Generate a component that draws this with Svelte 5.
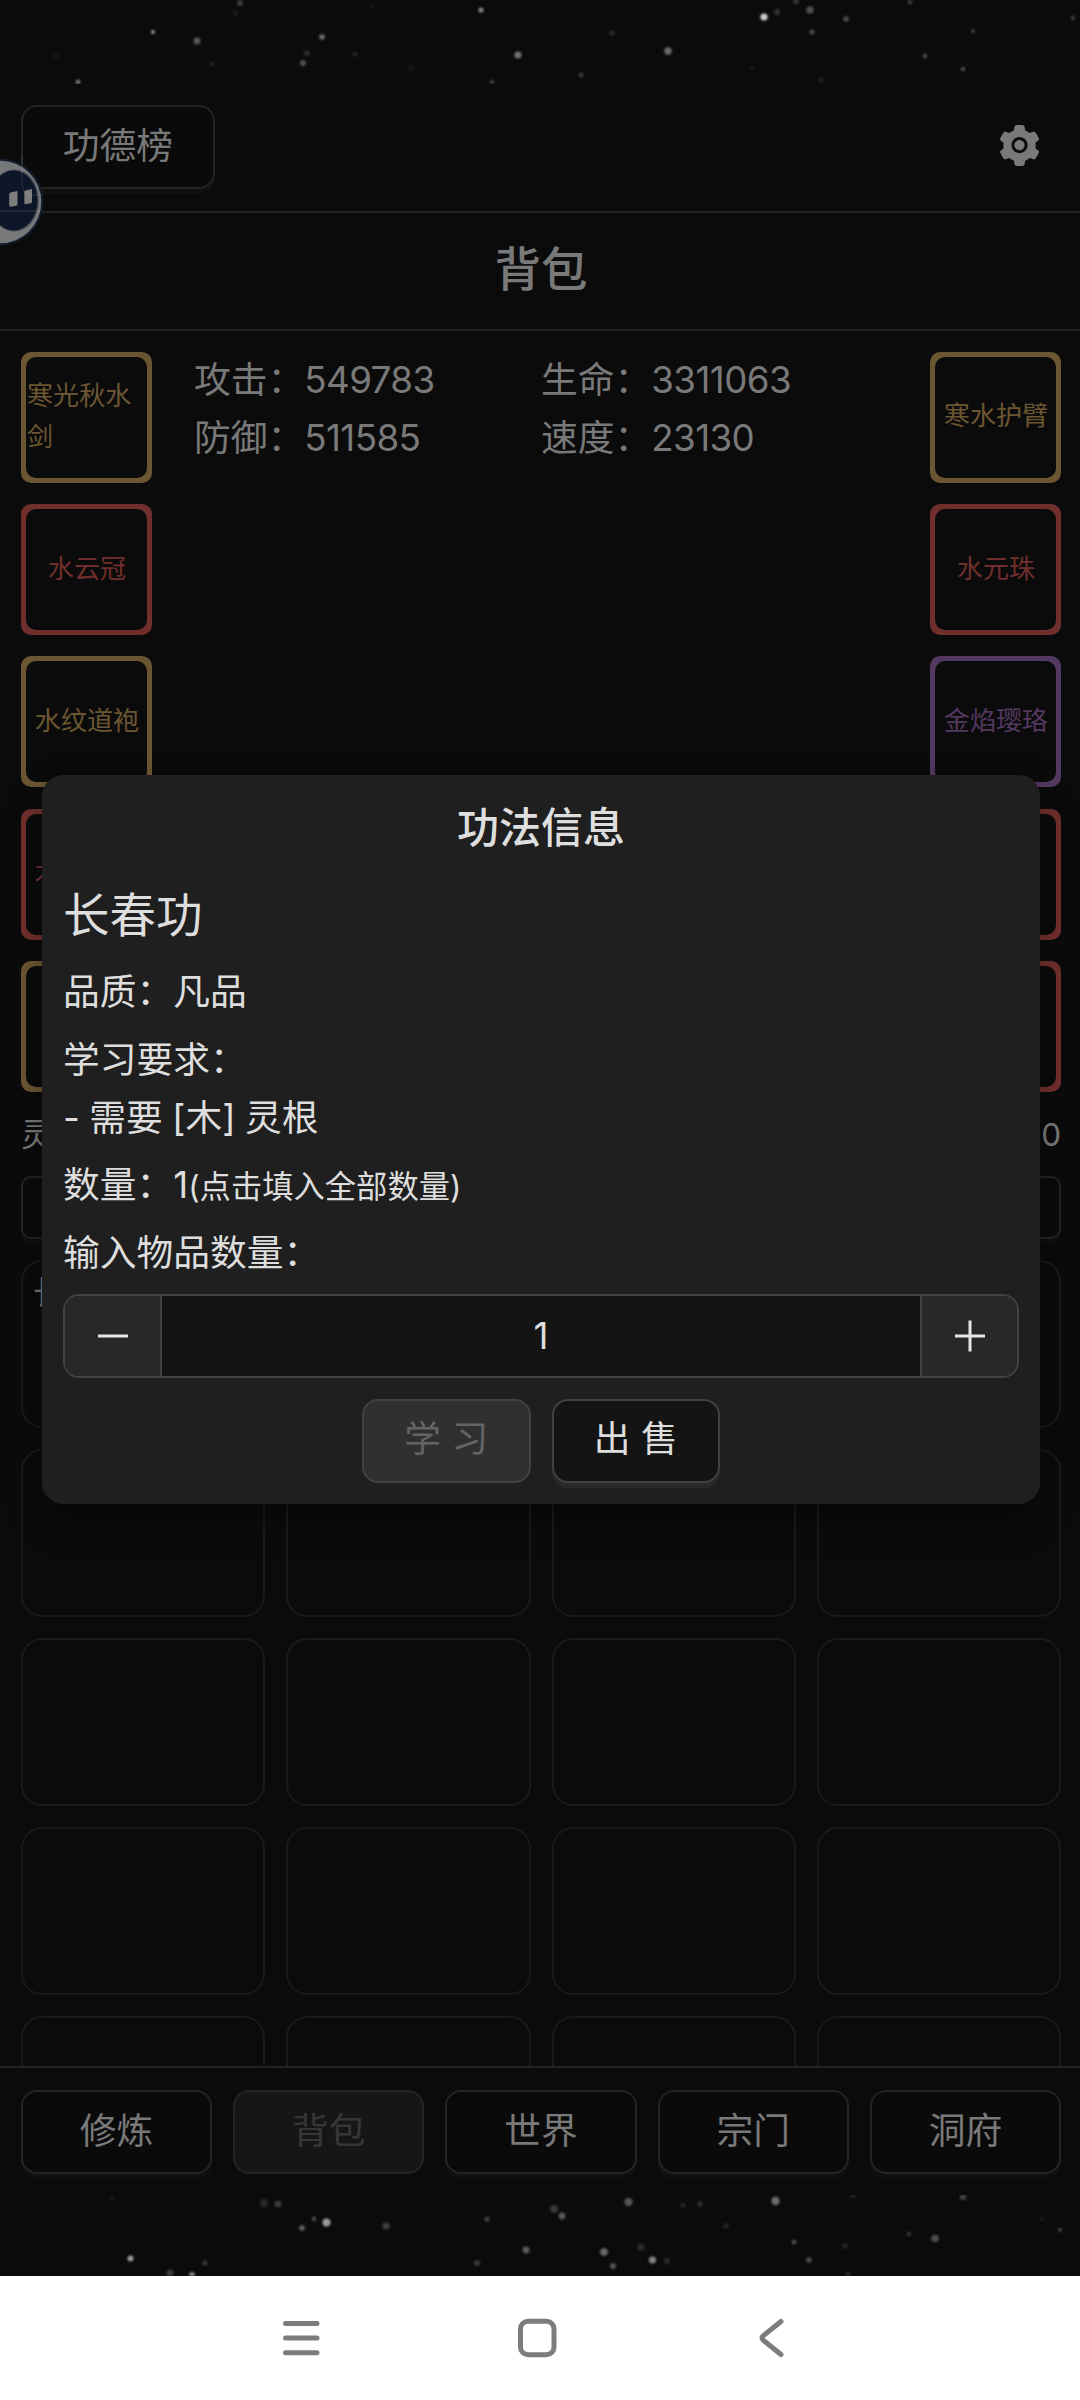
<script>
  const stats = [
    { label: "攻击", value: 549783 },
    { label: "生命", value: 3311063 },
    { label: "防御", value: 511585 },
    { label: "速度", value: 23130 },
  ]

  const leftGear = [
    { name: "寒光秋水剑", quality: "gold" },
    { name: "水云冠", quality: "red" },
    { name: "水纹道袍", quality: "gold" },
    { name: "木纹道靴", quality: "red" },
    { name: "", quality: "gold" },
  ]

  const rightGear = [
    { name: "寒水护臂", quality: "gold" },
    { name: "水元珠", quality: "red" },
    { name: "金焰璎珞", quality: "purple" },
    { name: "", quality: "red" },
    { name: "", quality: "red" },
  ]

  const cells = ["长春功", ...Array(19).fill("")]

  const tabs = ["修炼", "背包", "世界", "宗门", "洞府"]
  let activeTab = "背包"
  let amount = 1

  // x, y, radius, opacity
  const stars = [
    [153, 32, 2, 0.6], [197, 41, 3.4, 0.32], [240, 3, 3, 0.2], [235, 13, 2.5, 0.08],
    [322, 37, 2.8, 0.42], [307, 53, 3, 0.14], [303, 63, 3, 0.3], [355, 54, 2.6, 0.1],
    [481, 10, 2.6, 0.5], [518, 55, 3.6, 0.42], [612, 33, 3, 0.12], [668, 51, 3.8, 0.4],
    [581, 75, 2.4, 0.22], [764, 17, 3.6, 0.8], [777, 12, 3, 0.16], [796, 1, 3, 0.2],
    [810, 10, 3.8, 0.28], [846, 19, 2.8, 0.28], [812, 32, 2.6, 0.26], [910, 2, 2.4, 0.22],
    [973, 31, 2, 0.24], [925, 56, 2.2, 0.28], [963, 69, 2.2, 0.28], [1073, 18, 2.4, 0.2],
    [78, 82, 2.4, 0.45], [492, 82, 2.2, 0.22], [821, 80, 2.6, 0.08], [411, 68, 3, 0.06],
    [56, 56, 3, 0.06], [212, 64, 2.4, 0.1], [752, 68, 2.6, 0.06], [372, 6, 2, 0.08],
    [264, 2203, 4, 0.12], [278, 2204, 3.6, 0.2], [302, 2228, 2.8, 0.36], [314, 2219, 2.4, 0.26],
    [326.5, 2222.5, 4, 0.6], [386, 2226, 3.6, 0.22], [487, 2219, 2.6, 0.22], [526, 2250, 3.4, 0.34],
    [130.5, 2258.5, 3, 0.6], [170, 2273, 3.6, 0.2], [205, 2263, 2.6, 0.18], [192, 2275, 3, 0.5],
    [477, 2263, 3, 0.2], [554, 2209, 3.8, 0.2], [562, 2216, 3.4, 0.32], [628.5, 2202, 4.2, 0.3],
    [683, 2205, 2.6, 0.1], [700, 2204, 2.6, 0.16], [775.5, 2201, 4.2, 0.4], [853, 2196, 2.4, 0.1],
    [963, 2197, 3.2, 0.22], [604, 2252, 3.8, 0.4], [613, 2266, 3, 0.3], [641, 2247, 3.6, 0.14],
    [652.5, 2260, 3.6, 0.5], [667, 2261, 3.2, 0.12], [726, 2226, 2.8, 0.1], [794, 2242, 2.4, 0.28],
    [809, 2260, 2.8, 0.28], [845, 2246, 2.8, 0.12], [909, 2234, 2.4, 0.16], [935, 2238.5, 3.8, 0.28],
    [1060, 2230, 2, 0.26], [848, 2274, 2.4, 0.12], [112, 2197, 2.6, 0.06], [1042, 2219, 2.4, 0.06],
  ]
</script>

<div class="screen">
  <svg class="stars" width="1080" height="2276" viewBox="0 0 1080 2276">
    {#each stars as [x, y, r, o]}
      <circle cx={x} cy={y} {r} fill="#fff" opacity={o} />
    {/each}
  </svg>

  <div class="page">
    <header>
      <button class="btn rank">功德榜</button>
      <svg class="setting" viewBox="0 0 1024 1024" width="47" height="47" fill="currentColor">
        <path d="M512.5 390.6c-29.9 0-57.9 11.6-79.1 32.8-21.1 21.2-32.8 49.2-32.8 79.1 0 29.9 11.7 57.9 32.8 79.1 21.2 21.1 49.2 32.8 79.1 32.8 29.9 0 57.9-11.7 79.1-32.8 21.1-21.2 32.8-49.2 32.8-79.1 0-29.9-11.7-57.9-32.8-79.1a110.96 110.96 0 0 0-79.1-32.8zm412.3 235.5l-65.4-55.9c3.1-19 4.7-38.4 4.7-57.7s-1.6-38.8-4.7-57.7l65.4-55.9a32.03 32.03 0 0 0 9.3-35.2l-.9-2.6a442.5 442.5 0 0 0-79.6-137.7l-1.8-2.1a32.12 32.12 0 0 0-35.1-9.5l-81.2 28.9c-30-24.6-63.4-44-99.6-57.5l-15.7-84.9a32.05 32.05 0 0 0-25.8-25.7l-2.7-.5c-52-9.4-106.8-9.4-158.8 0l-2.7.5a32.05 32.05 0 0 0-25.8 25.7l-15.8 85.3a353.44 353.44 0 0 0-98.9 57.3l-81.8-29.1a32 32 0 0 0-35.1 9.5l-1.8 2.1a445.93 445.93 0 0 0-79.6 137.7l-.9 2.6c-4.5 12.5-.8 26.5 9.3 35.2l66.2 56.5c-3.1 18.8-4.6 38-4.6 57 0 19.2 1.5 38.4 4.6 57l-66 56.5a32.03 32.03 0 0 0-9.3 35.2l.9 2.6c18.1 50.3 44.8 96.8 79.6 137.7l1.8 2.1a32.12 32.12 0 0 0 35.1 9.5l81.8-29.1c29.8 24.5 63 43.9 98.9 57.3l15.8 85.3a32.05 32.05 0 0 0 25.8 25.7l2.7.5a448.27 448.27 0 0 0 158.8 0l2.7-.5a32.05 32.05 0 0 0 25.8-25.7l15.7-84.9c36.2-13.6 69.6-32.9 99.6-57.5l81.2 28.9a32 32 0 0 0 35.1-9.5l1.8-2.1c34.8-41.1 61.5-87.4 79.6-137.7l.9-2.6c4.3-12.4.6-26.3-9.5-35zm-412.3 52.2c-97.1 0-175.8-78.7-175.8-175.8s78.7-175.8 175.8-175.8 175.8 78.7 175.8 175.8-78.7 175.8-175.8 175.8z" />
      </svg>
    </header>

    <h1>背包</h1>

    <main>
      <section class="role">
        <div class="gear">
          {#each leftGear as g}
            <div class="slot {g.quality}"><span>{g.name}</span></div>
          {/each}
        </div>
        <div class="stats">
          {#each stats as s}
            <div>{s.label}：<span class="num">{s.value}</span></div>
          {/each}
        </div>
        <div class="gear">
          {#each rightGear as g}
            <div class="slot {g.quality}"><span>{g.name}</span></div>
          {/each}
        </div>
      </section>

      <div class="money"><span>灵</span><span>0</span></div>
      <div class="filter"></div>

      <div class="bag">
        {#each cells as c}
          <div class="cell">{c}</div>
        {/each}
      </div>
    </main>

    <footer>
      {#each tabs as t}
        <button class="btn" class:disabled={t === activeTab} on:click={() => (activeTab = t)}>{t}</button>
      {/each}
    </footer>
  </div>

  <svg class="ball" width="48" height="96" viewBox="0 0 48 96">
    <circle cx="0" cy="48" r="43.5" fill="#131c2b" />
    <circle cx="0" cy="48" r="41.3" fill="#777879" />
    <ellipse cx="14.5" cy="46.5" rx="24.5" ry="31" fill="#4a5058" />
    <ellipse cx="13.5" cy="46.5" rx="24" ry="30" fill="#0d1628" />
    <path d="M10.5 38.5l7-1.5v13.5q0 1-1.2 1.2l-5.6 1q-1.5 0-1.5-1.5V40q0-1.2 1.3-1.5zM25.5 36.5l6.5-1.5v13q0 1-1.2 1.3l-5 1q-1.5 0-1.5-1.5V38q0-1.2 1.2-1.5z" fill="#7c7d7c" />
    <path d="M0 57h40" stroke="#fff" stroke-opacity=".07" stroke-width="2" />
    <path d="M22 0v28q0 14 14 13h6" fill="none" stroke="#fff" stroke-opacity=".06" stroke-width="2" />
  </svg>

  <div class="modal">
    <h2>功法信息</h2>
    <h3>长春功</h3>
    <p>品质：凡品</p>
    <p>学习要求：<br />- 需要 [木] 灵根</p>
    <p>数量：1<small>(点击填入全部数量)</small></p>
    <p>输入物品数量：</p>

    <div class="amount">
      <button on:click={() => amount--} aria-label="减少">
        <svg width="32" height="32" viewBox="0 0 32 32"><path d="M1 16h30" stroke="currentColor" stroke-width="3" /></svg>
      </button>
      <div class="value">{amount}</div>
      <button on:click={() => amount++} aria-label="增加">
        <svg width="32" height="32" viewBox="0 0 32 32"><path d="M1 16h30M16 .5v31" stroke="currentColor" stroke-width="3" /></svg>
      </button>
    </div>

    <div class="actions">
      <button class="btn disabled">学 习</button>
      <button class="btn">出 售</button>
    </div>
  </div>

  <nav>
    <svg width="1080" height="124" viewBox="0 0 1080 124" fill="none" stroke="#7c7c7c" stroke-width="5" stroke-linecap="round" stroke-linejoin="round">
      <path d="M285.5 47.5h31.5M285.5 62h31.5M285.5 76.7h31.5" />
      <rect x="520.5" y="45.3" width="33.5" height="33.5" rx="7.5" />
      <path d="M781 45.5l-17.5 14q-3 2.5 0 5l17.5 14" />
    </svg>
  </nav>
</div>

<style>
  :global(body) {
    background: #0b0b0b;
  }

  .screen {
    position: relative;
    width: 1080px;
    height: 2400px;
    overflow: hidden;
    background: #0b0b0b;
    color: #797979;
    font-family: Inter, "Noto Sans CJK SC", sans-serif;
    font-size: 36.75px;
    line-height: 57.75px;
  }

  .stars {
    position: absolute;
    top: 0;
    left: 0;
    filter: blur(1px);
  }

  .page {
    position: relative;
    display: flex;
    flex-direction: column;
    width: 1082px;
    height: 2276px;
    padding-top: 84px;
    box-sizing: border-box;
  }

  header {
    display: flex;
    justify-content: space-between;
    align-items: flex-start;
    height: 127px;
    padding: 21px 39px 0 21px;
    box-sizing: border-box;
    background: #0b0b0b;
  }

  .setting {
    margin-top: 17px;
  }

  h1,
  h2,
  h3,
  p {
    margin: 0;
    font-weight: 400;
  }

  h1 {
    height: 120px;
    box-sizing: border-box;
    border-top: 2px solid #232323;
    border-bottom: 2px solid #232323;
    font-size: 46.5px;
    font-weight: 500;
    line-height: 112px;
    text-align: center;
    background: #0b0b0b;
  }

  .btn {
    height: 84px;
    padding: 0 0 3px;
    box-sizing: border-box;
    border: 2px solid #242424;
    border-radius: 16px;
    background: #0a0a0a;
    box-shadow: 0 5px 0 #101010;
    color: #797979;
    font: inherit;
    line-height: 76px;
  }

  .btn.disabled {
    background: #161616;
    box-shadow: none;
    color: #363636;
  }

  .rank {
    width: 194px;
  }

  main {
    flex: 1;
    min-height: 0;
    overflow: hidden;
    padding: 21px 21px 0;
    background: #0b0b0b;
  }

  .role {
    display: flex;
    gap: 21px;
  }

  .gear {
    display: flex;
    flex-direction: column;
    gap: 21.2px;
  }

  .slot {
    display: flex;
    width: 131px;
    height: 131px;
    padding: 5px;
    box-sizing: border-box;
    border-radius: 10px;
    background: currentColor;
    font-size: 26.1px;
    line-height: 41.25px;
  }

  .slot span {
    flex: 1;
    display: flex;
    align-items: center;
    justify-content: center;
    padding: 0 0 3px 1px;
    border-radius: 10px;
    background: #0b0b0b;
  }

  .gold {
    color: #6b5632;
  }

  .red {
    color: #702f2d;
  }

  .purple {
    color: #533860;
  }

  .stats {
    flex: 1;
    display: grid;
    grid-template-columns: 1fr 1fr;
    align-content: start;
    margin-top: -1px;
    padding: 0 21px;
  }

  .num {
    letter-spacing: -0.6px;
  }

  .money {
    display: flex;
    justify-content: space-between;
    margin-top: 18px;
    font-size: 31.5px;
    line-height: 49.5px;
  }

  .filter {
    height: 63px;
    margin-top: 17px;
    box-sizing: border-box;
    border: 2px solid #242424;
    border-radius: 10px;
    box-shadow: 0 5px 0 #0f0f0f;
  }

  .bag {
    display: grid;
    grid-template-columns: repeat(4, 1fr);
    gap: 21px;
    margin-top: 21px;
  }

  .cell {
    height: 168px;
    padding: 6px 10px;
    box-sizing: border-box;
    border: 2px solid #1a1a1a;
    border-radius: 21px;
    font-size: 31.5px;
    line-height: 50px;
  }

  /* opaque down to the stars below the tabs */
  footer {
    display: grid;
    grid-template-columns: repeat(5, 1fr);
    gap: 21px;
    height: 129px;
    margin-bottom: 81px;
    padding: 22px 21px 0;
    box-sizing: border-box;
    border-top: 2px solid #232323;
    background: linear-gradient(#0b0b0b 127px, transparent 127px);
  }

  .ball {
    position: absolute;
    top: 153.5px;
    left: 0;
  }

  .modal {
    position: absolute;
    top: 775px;
    left: 42px;
    width: 998px;
    height: 729px;
    padding: 21px;
    box-sizing: border-box;
    border-radius: 21px;
    background: #1f1f1f;
    box-shadow: 0 16px 42px rgba(0, 0, 0, 0.2), 0 8px 16px rgba(0, 0, 0, 0.15);
    color: #dedede;
  }

  h2 {
    margin-bottom: 22px;
    font-size: 42px;
    font-weight: 500;
    line-height: 63px;
    text-align: center;
  }

  h3 {
    margin-bottom: 14px;
    font-size: 46.5px;
    line-height: 68px;
  }

  p {
    margin-bottom: 10px;
    word-spacing: -1px;
  }

  small {
    font-size: 31.3px;
    line-height: 1;
  }

  .amount {
    display: flex;
    height: 84px;
    margin-top: 12px;
    margin-bottom: 21px;
    box-sizing: border-box;
    border: 2px solid #424242;
    border-radius: 16px;
    overflow: hidden;
    background: #141414;
  }

  .amount button {
    display: flex;
    align-items: center;
    justify-content: center;
    width: 95px;
    padding: 0;
    border: none;
    background: #282828;
    color: #e6e6e6;
  }

  .value {
    flex: 1;
    border: solid #424242;
    border-width: 0 2px;
    line-height: 79px;
    text-align: center;
  }

  .actions {
    display: flex;
    justify-content: center;
    gap: 21px;
  }

  .actions .btn {
    width: 168.5px;
    border-color: #424242;
    background: #141414;
    box-shadow: 0 5px 0 #292929;
    color: #dedede;
  }

  .actions .disabled {
    background: #303030;
    box-shadow: none;
    color: #646464;
  }

  nav {
    position: relative;
    height: 124px;
    background: #fff;
  }
</style>
